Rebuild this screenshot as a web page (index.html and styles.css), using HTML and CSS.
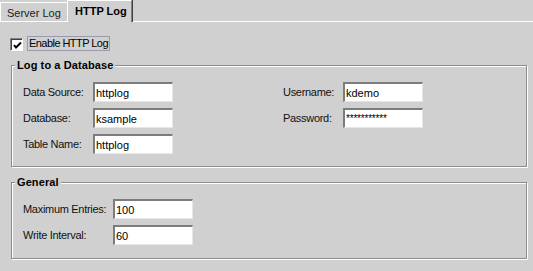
FILE: index.html
```html
<!DOCTYPE html>
<html>
<head>
<meta charset="utf-8">
<link rel="stylesheet" href="styles.css">
</head>
<body>
<div class="tabs">
  <div class="tab">Server Log</div>
  <div class="tab active">HTTP Log</div>
  <div class="tab-fill"></div>
</div>
<div class="page">
  <div class="check-row">
    <span class="checkbox"><svg width="9" height="9" viewBox="0 0 9 9"><path d="M1 4 L3 6.5 L8 1.5" stroke="#000" stroke-width="2" fill="none"/></svg></span>
    <span class="check-label">Enable HTTP Log</span>
  </div>
  <fieldset class="group">
    <legend>Log to a Database</legend>
    <div class="group-body two-cols">
      <div class="col col-left">
        <label>Data Source:</label><input type="text" value="httplog">
        <label>Database:</label><input type="text" value="ksample">
        <label>Table Name:</label><input type="text" value="httplog">
      </div>
      <div class="col col-right">
        <label>Username:</label><input type="text" value="kdemo">
        <label>Password:</label><input type="text" class="pw" value="***********">
      </div>
    </div>
  </fieldset>
  <fieldset class="group group-general">
    <legend>General</legend>
    <div class="group-body">
      <div class="col col-general">
        <label>Maximum Entries:</label><input type="text" value="100">
        <label>Write Interval:</label><input type="text" value="60">
      </div>
    </div>
  </fieldset>
</div>
</body>
</html>
```
FILE: styles.css
```css
html, body {
  margin: 0;
  padding: 0;
  background: #d0d0d0;
}
body {
  font-family: "Liberation Sans", Arial, sans-serif;
  font-size: 11px;
  color: #000;
  width: 533px;
  height: 271px;
  overflow: hidden;
}
.tabs {
  display: flex;
  align-items: flex-end;
  height: 22px;
}
.tab {
  box-sizing: border-box;
  height: 20px;
  width: 67px;
  padding-left: 6px;
  padding-top: 3px;
  line-height: 14px;
  border-top: 1px solid #fff;
  border-left: 1px solid #fff;
  border-bottom: 1px solid #fff;
  color: #222;
}
.tab.active {
  height: 22px;
  width: 65px;
  padding-left: 7px;
  padding-top: 3px;
  font-weight: bold;
  color: #000;
  border-bottom: none;
  border-right: 1px solid #808080;
  box-shadow: 1px 0 0 #404040;
}
.tab-fill {
  flex: 1;
  border-bottom: 1px solid #fff;
  margin-left: 1px;
}
.page {
  padding-left: 11px;
}
.check-row {
  display: flex;
  align-items: flex-start;
  margin-top: 14px;
  margin-left: -1px;
  height: 15px;
}
.checkbox {
  box-sizing: border-box;
  width: 13px;
  height: 13px;
  margin-top: 2px;
  background: #fff;
  border-top: 1px solid #808080;
  border-left: 1px solid #808080;
  border-right: 1px solid #fff;
  border-bottom: 1px solid #fff;
  box-shadow: inset 1px 1px 0 #404040;
  display: flex;
  align-items: center;
  justify-content: center;
}
.checkbox svg {
  margin: 1px 0 0 1px;
}
.check-label {
  margin-left: 4px;
  box-sizing: border-box;
  height: 15px;
  line-height: 13px;
  padding: 0 1px 0 1px;
  border: 1px solid #9a9aae;
  letter-spacing: -0.55px;
}
.group {
  box-sizing: border-box;
  width: 516px;
  margin: 7px 0 0 0;
  padding: 9px 0 12px 3px;
  border: 1px solid #8c8c8c;
  box-shadow: 1px 1px 0 #fff, inset 1px 1px 0 #fff;
  min-width: 0;
}
.group legend {
  font-weight: bold;
  line-height: 15px;
  padding: 0 2px;
  background: #d0d0d0;
  letter-spacing: 0.1px;
}
.group-general {
  margin-top: 8px;
  padding-bottom: 13px;
}
.group-body {
  padding-left: 8px;
}
.two-cols {
  display: flex;
}
.col {
  display: grid;
  row-gap: 6px;
  align-items: center;
  align-content: start;
}
.col-left {
  grid-template-columns: 70px 80px;
  width: 260px;
}
.col-right {
  grid-template-columns: 60px 80px;
}
.col-general {
  grid-template-columns: 90px 80px;
}
label {
  letter-spacing: -0.3px;
  color: #111;
}
input {
  box-sizing: border-box;
  width: 80px;
  height: 20px;
  margin: 0;
  padding: 0 1px;
  font-family: "Liberation Sans", Arial, sans-serif;
  font-size: 11px;
  color: #000;
  background: #fff;
  border-top: 2px solid #7c7c7c;
  border-left: 2px solid #7c7c7c;
  border-right: 1px solid #e6e6e6;
  border-bottom: 1px solid #e6e6e6;
  outline: none;
}
.pw {
  font-size: 10px;
  letter-spacing: -0.2px;
}
```
